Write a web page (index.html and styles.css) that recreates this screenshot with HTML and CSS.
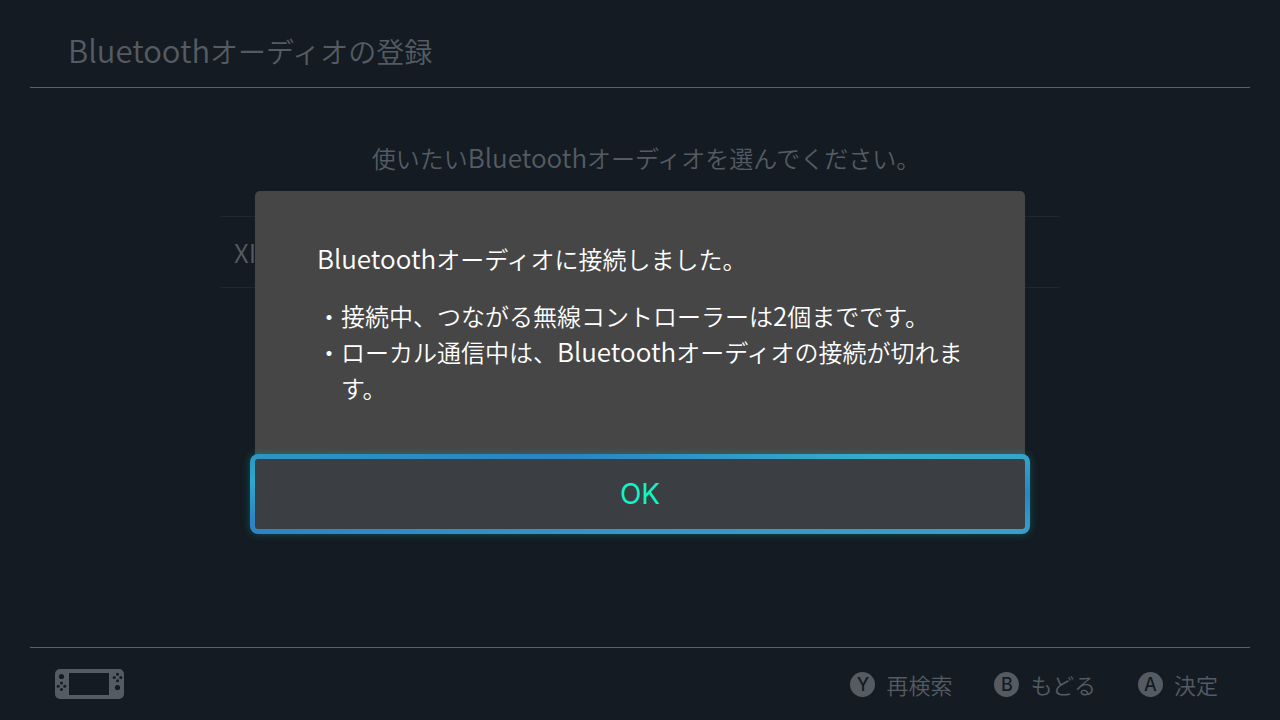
FILE: index.html
```html
<!DOCTYPE html>
<html lang="ja">
<head>
    <meta charset="UTF-8">
    <meta name="viewport" content="width=device-width, initial-scale=1.0">
    <title>Bluetoothオーディオの登録</title>
    <link rel="stylesheet" href="styles.css">
</head>
<body>
    <div class="screen">
        <header class="screen-header">
            <h1><span class="latin">Bluetooth</span>オーディオの登録</h1>
        </header>

        <main class="screen-main">
            <p class="prompt">使いたい<span class="latin">Bluetooth</span>オーディオを選んでください。</p>
            <ul class="device-list">
                <li><button class="device latin" type="button">XI</button></li>
            </ul>
        </main>

        <footer class="screen-footer">
            <svg class="console-icon" width="70" height="30" viewBox="0 0 70 30" fill="currentColor" aria-hidden="true">
                <path fill-rule="evenodd" d="M5 0H64a5 5 0 0 1 5 5V25a5 5 0 0 1-5 5H5a5 5 0 0 1-5-5V5a5 5 0 0 1 5-5zM14 4V26H54V4z"></path>
                <g class="console-keys">
                    <circle cx="6.5" cy="7.5" r="2.6"></circle>
                    <circle cx="6.5" cy="14" r="1.5"></circle>
                    <circle cx="3.2" cy="17.3" r="1.5"></circle>
                    <circle cx="9.8" cy="17.3" r="1.5"></circle>
                    <circle cx="6.5" cy="20.6" r="1.5"></circle>
                    <circle cx="62.5" cy="5.2" r="1.5"></circle>
                    <circle cx="59.2" cy="8.5" r="1.5"></circle>
                    <circle cx="65.8" cy="8.5" r="1.5"></circle>
                    <circle cx="62.5" cy="11.8" r="1.5"></circle>
                    <circle cx="62.5" cy="18.5" r="2.6"></circle>
                </g>
            </svg>
            <div class="hints">
                <button class="hint" type="button"><span class="key">Y</span>再検索</button>
                <button class="hint" type="button"><span class="key">B</span>もどる</button>
                <button class="hint" type="button"><span class="key">A</span>決定</button>
            </div>
        </footer>
    </div>

    <div class="overlay">
        <div class="dialog" role="dialog" aria-modal="true" aria-labelledby="dialog-title">
            <div class="dialog-body">
                <p id="dialog-title"><span class="latin">Bluetooth</span>オーディオに接続しました。</p>
                <ul class="notes">
                    <li>接続中、つながる無線コントローラーは<span class="latin">2</span>個までです。</li>
                    <li>ローカル通信中は、<span class="latin">Bluetooth</span>オーディオの接続が切れます。</li>
                </ul>
            </div>
            <button class="ok-btn" type="button">OK</button>
        </div>
    </div>
</body>
</html>
```

FILE: styles.css
```css
:root {
    --color-bg: #141b22;
    --color-dim: #555b62;
    --color-line: #5a6067;
    --color-row-line: #20272e;
    --color-dialog: #464646;
    --color-button: #3b3e43;
    --color-accent: #10f5c6;
}

* {
    box-sizing: border-box;
}

body {
    margin: 0;
    background: var(--color-bg);
    color: var(--color-dim);
    font-family: "Noto Sans CJK JP", sans-serif;
    font-size: 24px;
    font-weight: 350;
    line-height: 36px;
}

h1, p, ul {
    margin: 0;
    padding: 0;
}

ul {
    list-style: none;
}

button {
    border: none;
    background: none;
    color: inherit;
    font: inherit;
    cursor: pointer;
}

/* Latin letters run a little larger than the kana beside them */
.latin {
    font-size: 26px;
    line-height: 1;
}

.screen {
    min-height: 100vh;
    padding: 0 30px;
    display: flex;
    flex-direction: column;
}

.screen-header {
    height: 88px;
    padding: 14px 38px 0;
    display: flex;
    align-items: center;
    border-bottom: 1px solid var(--color-line);
}

.screen-header h1 {
    font-size: 28px;
    font-weight: inherit;
}

.screen-header .latin {
    font-size: 31px;
}

.screen-main {
    flex: 1;
    padding-top: 52px;
}

.prompt {
    padding-left: 12px;
    text-align: center;
}

.device-list {
    max-width: 840px;
    margin: 40px auto 0;
    border-top: 1px solid var(--color-row-line);
}

.device {
    width: 100%;
    height: 71px;
    padding: 0 14px;
    text-align: left;
    border-bottom: 1px solid var(--color-row-line);
}

.screen-footer {
    height: 73px;
    padding: 0 32px 0 25px;
    display: flex;
    justify-content: space-between;
    align-items: center;
    border-top: 1px solid var(--color-line);
}

.console-keys {
    fill: var(--color-bg);
}

.hints {
    display: flex;
    gap: 42px;
}

.hint {
    padding: 0;
    display: flex;
    align-items: center;
    gap: 11px;
    font-size: 22px;
}

.key {
    width: 25px;
    height: 25px;
    border-radius: 50%;
    background: var(--color-dim);
    color: var(--color-bg);
    font-family: Inter, sans-serif;
    font-size: 18px;
    font-weight: 500;
    line-height: 25px;
    text-align: center;
}

/* Dialog */
.overlay {
    position: fixed;
    inset: 0;
    display: flex;
    justify-content: center;
    align-items: center;
}

.dialog {
    width: 770px;
    max-width: 90%;
    background: var(--color-dialog);
    border-radius: 5px;
    color: #fff;
}

.dialog-body {
    padding: 50px 60px 53px 62px;
}

.notes {
    margin-top: 21px;
}

.notes li {
    padding-left: 24px;
    text-indent: -24px;
}

.notes li::before {
    content: "・";
}

.ok-btn {
    display: block;
    width: calc(100% + 10px);
    height: 80px;
    margin: -5px;
    border: 5px solid transparent;
    border-radius: 8px;
    background:
        linear-gradient(var(--color-button), var(--color-button)) padding-box,
        linear-gradient(#2d96c2, #2fa8cc 35%, #2c84c4 80%) left / 5px 100% no-repeat border-box,
        linear-gradient(#35a6ca, #2488c4 50%, #389fc8) right / 5px 100% no-repeat border-box,
        linear-gradient(90deg, #2d96c2, #2a84c2 40%, #35accb 80%, #35a6ca) top / 100% 50% no-repeat border-box,
        linear-gradient(90deg, #2c84c4, #3597c8 50%, #389fc8) bottom / 100% 50% no-repeat border-box;
    box-shadow: 0 0 8px rgba(20, 160, 160, 0.4);
    color: var(--color-accent);
    font-family: Inter, sans-serif;
    font-size: 28px;
    font-weight: 400;
}

@media (max-width: 700px) {
    .dialog-body {
        padding: 30px 24px;
    }

    .hints {
        gap: 16px;
    }
}
```
